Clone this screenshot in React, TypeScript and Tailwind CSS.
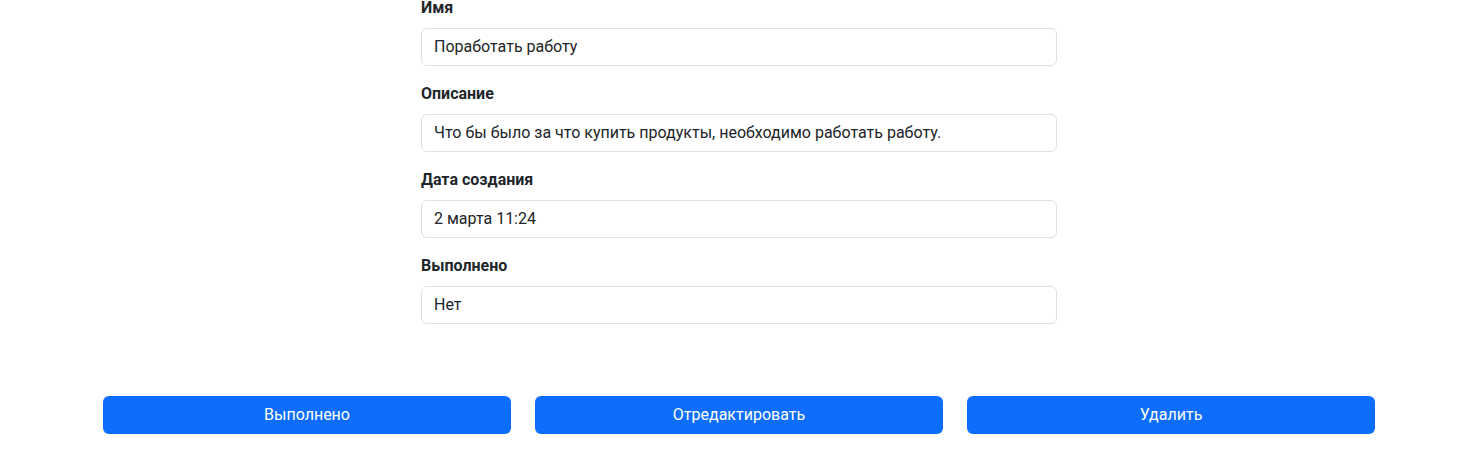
const fields = [
  { label: "Имя", value: "Поработать работу" },
  { label: "Описание", value: "Что бы было за что купить продукты, необходимо работать работу." },
  { label: "Дата создания", value: "2 марта 11:24" },
  { label: "Выполнено", value: "Нет" },
];

const actions = ["Выполнено", "Отредактировать", "Удалить"];

export default function App() {
  return (
    <div
      className="min-h-[467px] bg-white text-[#212529] text-base pl-[2px]"
      style={{ fontFamily: 'Roboto, "Noto Sans", sans-serif' }}
    >
      <div className="mx-auto w-[1272px] -mt-[4px]">
        {/* Task details */}
        <div className="mx-auto w-[636px]">
          {fields.map((field) => (
            <div key={field.label} className="mb-4">
              <label className="block mb-2 font-bold leading-6">{field.label}</label>
              <div className="h-[38px] px-3 flex items-center border border-[#dee2e6] rounded-[6px] leading-6">
                {field.value}
              </div>
            </div>
          ))}
        </div>

        {/* Actions */}
        <div className="grid grid-cols-3 gap-6 mt-[72px]">
          {actions.map((action) => (
            <button
              key={action}
              className="h-[38px] rounded-[6px] bg-[#0d6efd] text-white leading-6"
            >
              {action}
            </button>
          ))}
        </div>
      </div>
    </div>
  );
}
